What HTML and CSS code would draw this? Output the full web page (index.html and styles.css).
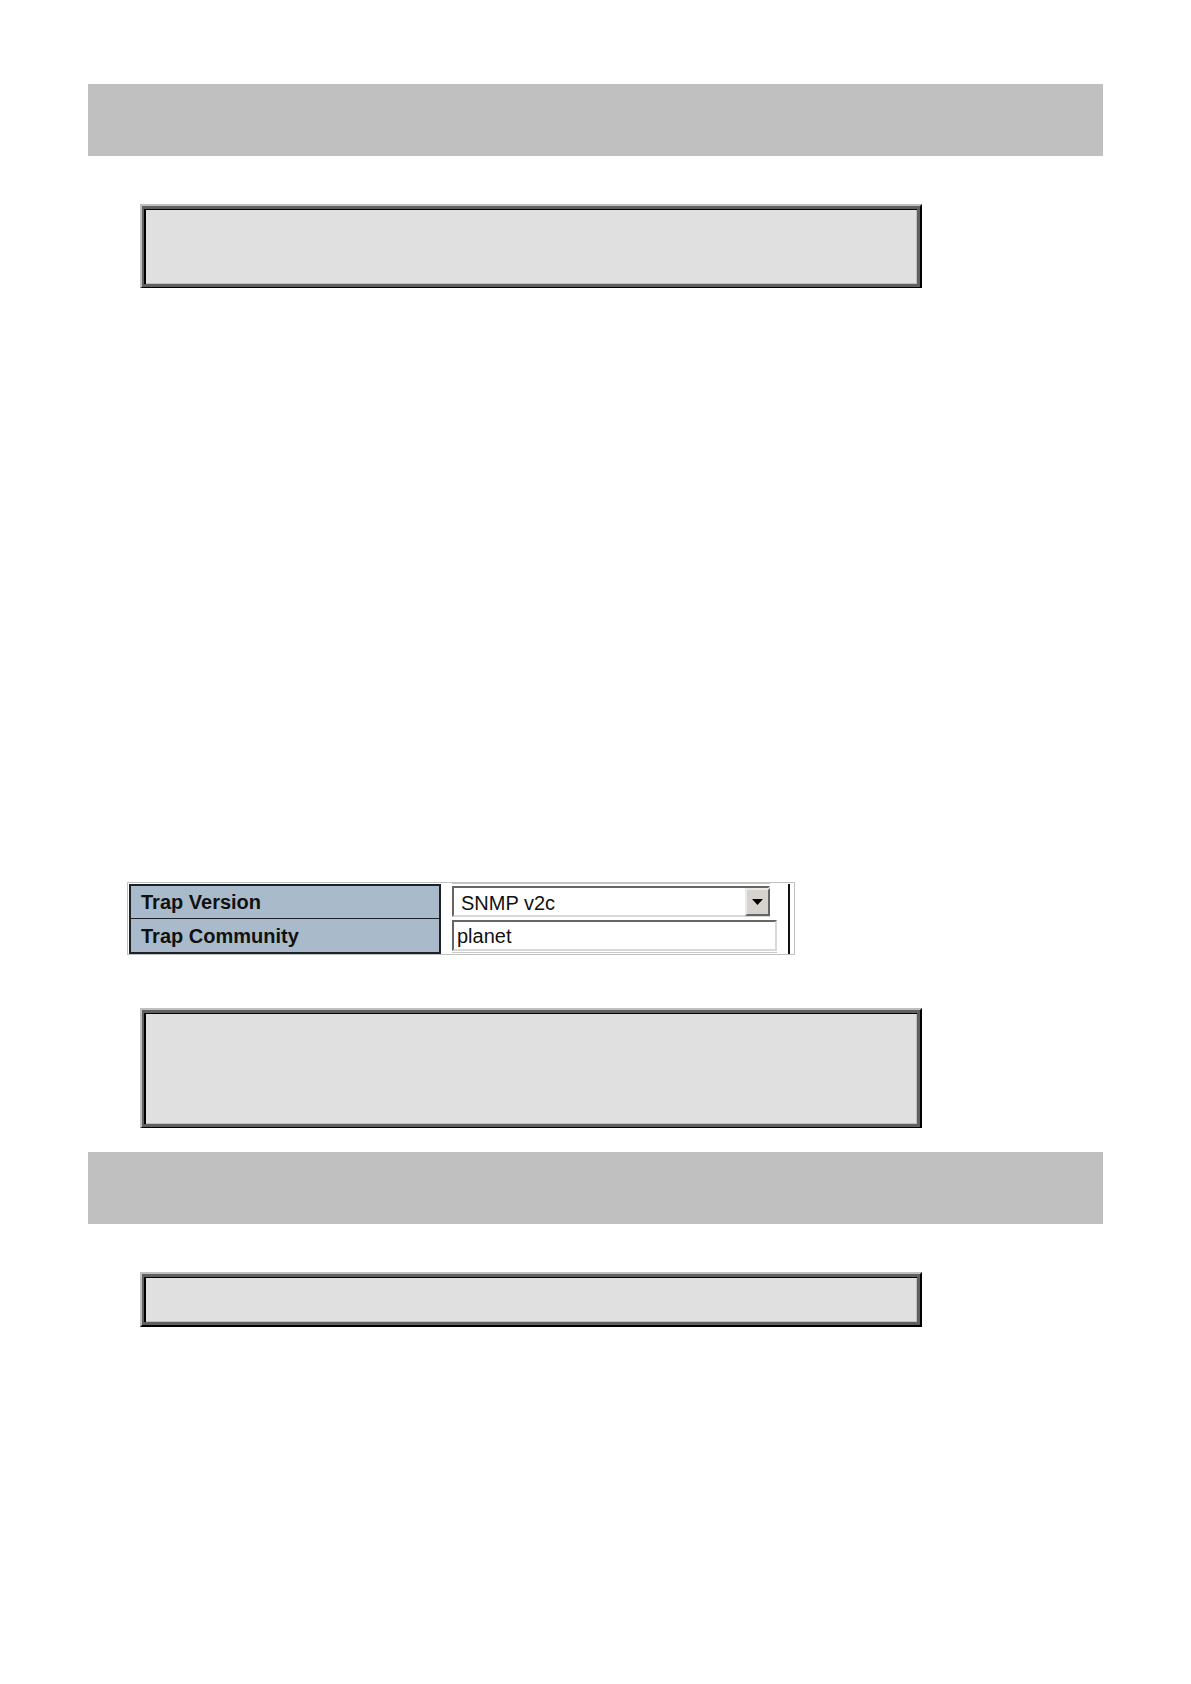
FILE: index.html
```html
<!DOCTYPE html>
<html lang="en">
<head>
    <meta charset="UTF-8">
    <meta name="viewport" content="width=device-width, initial-scale=1.0">
    <title>SNMP Trap</title>
    <link rel="stylesheet" href="styles.css">
</head>
<body>
    <main class="page">
        <div class="band"></div>

        <div class="note note-medium">
            <div class="note-body"></div>
        </div>

        <form class="trap-form">
            <table class="trap-table">
                <tr>
                    <th scope="row"><label for="trapVersion">Trap Version</label></th>
                    <td>
                        <div class="select-box">
                            <select id="trapVersion">
                                <option>SNMP v1</option>
                                <option selected>SNMP v2c</option>
                                <option>SNMP v3</option>
                            </select>
                            <span class="arrow">
                                <svg width="11" height="6" viewBox="0 0 11 6"><path d="M0 0h11L5.5 6z"/></svg>
                            </span>
                        </div>
                    </td>
                </tr>
                <tr>
                    <th scope="row"><label for="trapCommunity">Trap Community</label></th>
                    <td><input type="text" id="trapCommunity" value="planet"></td>
                </tr>
            </table>
        </form>

        <div class="note note-large">
            <div class="note-body"></div>
        </div>

        <div class="band"></div>

        <div class="note note-small">
            <div class="note-body"></div>
        </div>
    </main>
</body>
</html>
```

FILE: styles.css
```css
* {
    margin: 0;
    padding: 0;
    box-sizing: border-box;
    font-family: "Liberation Sans", Arial, sans-serif;
}

body {
    background-color: #fff;
    color: #111;
    font-size: 20px;
}

.page {
    padding: 84px 88px;
}

.band {
    height: 72px;
    background-color: #c0c0c0;
}

/* Bevelled boxes */
.note {
    display: flex;
    max-width: 782px;
    margin-left: 52px;
    border: 2px solid #000;
    border-top-color: #c0c0c0;
    border-left-color: #c0c0c0;
}

.note-body {
    flex: 1;
    background-color: #e0e0e0;
    border: 3px solid #606060;
    border-left-width: 2px;
    box-shadow: inset 2px 1px #000, inset -1px -1px #c0c0c0;
}

.note-small {
    min-height: 55px;
    margin-top: 48px;
}

.note-medium {
    min-height: 84px;
    margin-top: 48px;
    border-bottom-width: 1px;
}

.note-large {
    min-height: 120px;
    margin-top: 53px;
    margin-bottom: 24px;
    border-bottom-width: 1px;
}

/* Trap settings */
.trap-form {
    max-width: 668px;
    margin-top: 594px;
    margin-left: 39px;
    padding: 1px 4px 0 1px;
    border: 1px solid #c0c0c0;
}

.trap-table {
    width: 100%;
    border-spacing: 0;
    border-right: 2px solid #111;
}

.trap-table th {
    width: 312px;
    height: 34px;
    padding-top: 1px;
    padding-left: 10px;
    background-color: #a9bbcb;
    border: 2px solid #1c2228;
    border-bottom: none;
    text-align: left;
    line-height: 31px;
}

.trap-table tr:last-child th {
    height: 36px;
    border-top-width: 1px;
    border-bottom: 2px solid #1c2228;
}

.trap-table td {
    padding: 2px 11px 0 11px;
    vertical-align: top;
}

.select-box {
    position: relative;
    max-width: 318px;
}

.trap-table select,
.trap-table input {
    display: block;
    width: 100%;
    height: 31px;
    padding-top: 2px;
    background-color: #fff;
    border: 2px solid #666;
    border-right-color: #d8d8d4;
    border-bottom-color: #d8d8d4;
    border-radius: 0;
    color: #111;
    font-size: 20px;
    outline: none;
}

.trap-table select {
    appearance: none;
    padding-left: 7px;
    box-shadow: 0 -2px #fff, 0 -3px #c8c8c8;
}

.trap-table input {
    padding-left: 3px;
    box-shadow: 0 1px #fff, 0 2px #c8c8c8;
}

.arrow {
    position: absolute;
    top: 2px;
    right: 0;
    bottom: 1px;
    display: flex;
    align-items: center;
    justify-content: center;
    width: 25px;
    background-color: #d6d3ce;
    border: 2px solid #666;
    border-top-color: #eceae6;
    border-left-color: #eceae6;
    pointer-events: none;
}
```
